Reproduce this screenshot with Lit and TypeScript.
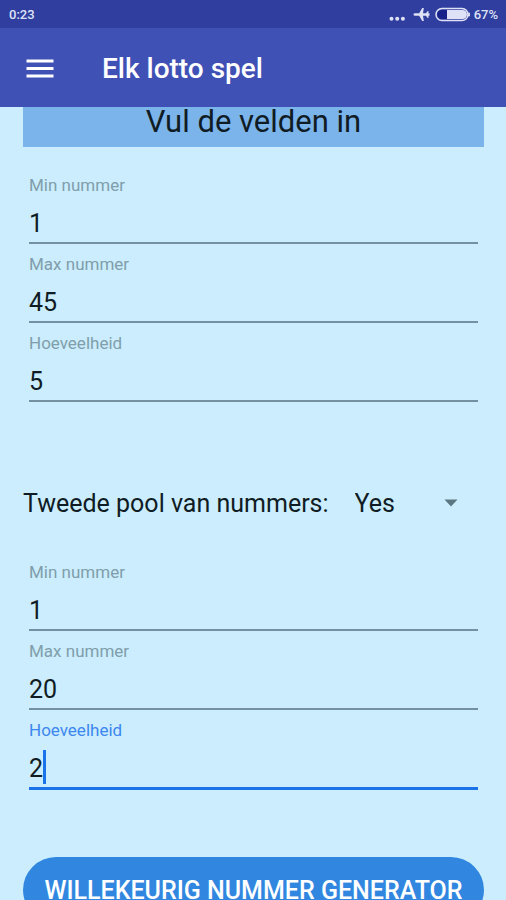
import { LitElement, html, css } from "lit";
import { customElement, property, state } from "lit/decorators.js";
import { classMap } from "lit/directives/class-map.js";
import { styleMap } from "lit/directives/style-map.js";

@customElement("status-bar")
class StatusBar extends LitElement {
  static styles = css`
    :host {
      display: flex;
      align-items: center;
      justify-content: space-between;
      height: 28px;
      padding: 2px 8px 0 9px;
      box-sizing: border-box;
      background: #303f9f;
      color: #dfe2f6;
      font-size: 13px;
      font-weight: 500;
      line-height: 16px;
    }
    .indicators {
      display: flex;
      align-items: center;
      gap: 4px;
    }
    svg {
      display: block;
      fill: currentColor;
    }
  `;

  render() {
    return html`
      <span>0:23</span>
      <div class="indicators">
        <svg width="20" height="16" viewBox="0 0 20 16" aria-hidden="true">
          <circle cx="2.5" cy="11.8" r="2" />
          <circle cx="8.2" cy="11.8" r="2" />
          <circle cx="13.9" cy="11.8" r="2" />
        </svg>
        <svg width="18" height="16" viewBox="0 0 18 16" aria-label="Airplane mode">
          <path
            d="M0.5 7.5Q0.5 6.3 2 6.3L6.2 6.3L9.2 1H10.8L10 6.3L13 6.3L14.4 4.3H15.8L15.2 6.3H16.5V8.7H15.2L15.8 10.7H14.4L13 8.7H10L10.8 14H9.2L6.2 8.7H2Q0.5 8.7 0.5 7.5Z"
          />
        </svg>
        <svg width="35" height="16" viewBox="0 0 35 16" aria-label="Battery">
          <rect x="1" y="1.5" width="32" height="12" rx="6" fill="none" stroke="currentColor" stroke-width="1.5" />
          <path d="M12 3H27.5A4.5 4.5 0 0 1 27.5 12H12Z" />
          <path d="M7 3H12V12H7A4.5 4.5 0 0 1 7 3Z" fill="#16218a" />
          <rect x="33" y="5.5" width="2" height="4" rx="1" />
        </svg>
        <span>67%</span>
      </div>
    `;
  }
}

@customElement("number-field")
class NumberField extends LitElement {
  @property() label = "";
  @property() value = "";
  @property({ type: Boolean }) active = false;

  static styles = css`
    :host {
      display: block;
    }
    .field {
      position: relative;
      display: flex;
      flex-direction: column;
      height: 79px;
      padding-top: 10px;
      box-sizing: border-box;
      border-bottom: 2px solid #7391a0;
    }
    label {
      color: #809eab;
      font-size: 17px;
      line-height: 20px;
    }
    input {
      width: 100%;
      height: 40px;
      margin: 9px 0 0;
      padding: 0;
      border: 0;
      outline: 0;
      background: none;
      color: #101c24;
      font: inherit;
      font-size: 25px;
      line-height: 40px;
      caret-color: #1a73e8;
    }
    .active {
      height: 80px;
      border-bottom: 3px solid #1a73e8;
    }
    .active label {
      color: #3d87ee;
    }
    .caret {
      position: absolute;
      bottom: 3px;
      width: 3px;
      height: 34px;
      background: #1a73e8;
      font-size: 25px;
    }
  `;

  private onInput(e: Event) {
    this.value = (e.target as HTMLInputElement).value;
  }

  render() {
    return html`
      <div class=${classMap({ field: true, active: this.active })}>
        <label for="entry">${this.label}</label>
        <input id="entry" type="text" inputmode="numeric" .value=${this.value} @input=${this.onInput} />
        ${this.active
          ? html`<span class="caret" style=${styleMap({ left: `${this.value.length}ch` })}></span>`
          : ""}
      </div>
    `;
  }
}

@customElement("app-root")
class AppRoot extends LitElement {
  @state() private firstPool = [
    { label: "Min nummer", value: "1", active: false },
    { label: "Max nummer", value: "45", active: false },
    { label: "Hoeveelheid", value: "5", active: false },
  ];
  @state() private secondPool = [
    { label: "Min nummer", value: "1", active: false },
    { label: "Max nummer", value: "20", active: false },
    { label: "Hoeveelheid", value: "2", active: true },
  ];

  static styles = css`
    :host {
      display: flex;
      flex-direction: column;
      height: 100vh;
      overflow: hidden;
      background: #cbedfd;
      color: #101c24;
      font-family: Roboto, "Liberation Sans", sans-serif;
    }
    header {
      display: flex;
      align-items: center;
      gap: 48px;
      flex: none;
      height: 79px;
      padding: 2px 26px 0;
      box-sizing: border-box;
      background: #3f51b5;
      color: #fff;
    }
    .menu {
      display: block;
      padding: 0;
      border: 0;
      background: none;
      color: inherit;
    }
    .menu svg {
      display: block;
      fill: currentColor;
    }
    h1 {
      margin: 0;
      font-size: 28px;
      font-weight: 500;
      line-height: 36px;
    }
    main {
      flex: 1;
      min-height: 0;
      padding: 0 22px 24px 23px;
      overflow: auto;
      scrollbar-width: none;
    }
    h2 {
      margin: -10px 0 0;
      background: #7bb3eb;
      font-size: 31px;
      font-weight: 400;
      line-height: 50px;
      text-align: center;
    }
    .pool {
      padding: 18px 6px 0;
    }
    .choice {
      display: flex;
      align-items: center;
      height: 48px;
      margin-top: 77px;
      font-size: 25px;
    }
    .choice label {
      white-space: nowrap;
    }
    .picker {
      position: relative;
      flex: 1;
      margin-left: 26px;
    }
    select {
      width: 100%;
      height: 48px;
      padding: 0;
      border: 0;
      appearance: none;
      background: none;
      color: inherit;
      font: inherit;
    }
    .picker svg {
      position: absolute;
      top: 20px;
      right: 26px;
      fill: #5d7782;
      pointer-events: none;
    }
    .choice + .pool {
      padding-top: 25px;
    }
    .generate {
      display: block;
      width: 100%;
      height: 66px;
      margin-top: 67px;
      padding: 0;
      border: 0;
      border-radius: 33px;
      background: #3187df;
      color: #fff;
      font: inherit;
      font-size: 25px;
      font-weight: 500;
      white-space: nowrap;
    }
  `;

  private fields(pool: { label: string; value: string; active: boolean }[]) {
    return pool.map(
      (f) => html`<number-field .label=${f.label} .value=${f.value} .active=${f.active}></number-field>`
    );
  }

  render() {
    return html`
      <status-bar></status-bar>
      <header>
        <button class="menu" aria-label="Menu">
          <svg width="28" height="20" viewBox="0 0 28 20">
            <path d="M0.5 0.5H27.5V3.5H0.5ZM0.5 8H27.5V11H0.5ZM0.5 15.5H27.5V18.5H0.5Z" />
          </svg>
        </button>
        <h1>Elk lotto spel</h1>
      </header>
      <main>
        <h2>Vul de velden in</h2>
        <section class="pool">${this.fields(this.firstPool)}</section>
        <div class="choice">
          <label for="second">Tweede pool van nummers:</label>
          <div class="picker">
            <select id="second">
              <option selected>Yes</option>
              <option>No</option>
            </select>
            <svg width="14" height="8" viewBox="0 0 14 8" aria-hidden="true"><path d="M0.5 0.5H13.5L7 7.5Z" /></svg>
          </div>
        </div>
        <section class="pool">${this.fields(this.secondPool)}</section>
        <button class="generate">WILLEKEURIG NUMMER GENERATOR</button>
      </main>
    `;
  }
}
